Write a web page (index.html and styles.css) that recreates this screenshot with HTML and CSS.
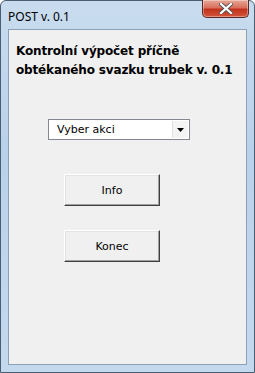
FILE: index.html
```html
<!DOCTYPE html>
<html lang="cs">
  <head>
    <meta charset="UTF-8" />
    <title>POST v. 0.1</title>
    <link rel="stylesheet" href="styles.css">
  </head>
  <body>
    <div class="window">
      <div class="titlebar">
        <span class="title">POST v. 0.1</span>
        <div class="close">
          <svg width="14" height="11" viewBox="0 0 14 11">
            <path d="M2 1 L12 10 M12 1 L2 10" stroke="#555" stroke-width="4" stroke-linecap="square" />
            <path d="M2 1 L12 10 M12 1 L2 10" stroke="#fff" stroke-width="2.2" stroke-linecap="square" />
          </svg>
        </div>
      </div>
      <div class="client">
        <h1 class="heading">Kontrolní výpočet příčně obtékaného svazku trubek v. 0.1</h1>
        <div class="combo">
          <span class="combo-text">Vyber akci</span>
          <span class="combo-arrow">
            <svg width="7" height="4" viewBox="0 0 7 4"><path d="M0 0 H7 L3.5 4 Z" fill="#000" /></svg>
          </span>
        </div>
        <div class="buttons">
          <button class="btn">Info</button>
          <button class="btn">Konec</button>
        </div>
      </div>
    </div>
  </body>
</html>
```

FILE: styles.css
```css
html,
body {
  margin: 0;
  padding: 0;
  background: #ffffff;
}
.window {
  width: 255px;
  height: 373px;
  box-sizing: border-box;
  border: 1px solid #4a5e72;
  border-radius: 6px 6px 0 0;
  background: linear-gradient(180deg, #c9dcef 0%, #b9d1ea 40%, #c4d9ee 100%);
  padding: 0 7px 7px 7px;
  display: flex;
  flex-direction: column;
  font-family: "DejaVu Sans", Tahoma, sans-serif;
}
.titlebar {
  height: 28px;
  display: flex;
  justify-content: space-between;
  align-items: flex-start;
}
.title {
  font-family: "Noto Sans", "Open Sans", sans-serif;
  font-size: 12px;
  color: #000;
  margin-top: 7px;
  margin-left: 0;
}
.close {
  width: 45px;
  height: 17px;
  margin-right: -2px;
  margin-top: -1px;
  border: 1px solid #5a2a26;
  border-top: none;
  border-radius: 0 0 5px 5px;
  background: linear-gradient(180deg, #e8a898 0%, #d8705c 45%, #c2321c 55%, #d2553b 100%);
  display: flex;
  align-items: center;
  justify-content: center;
  box-shadow: inset 0 0 0 1px rgba(255, 255, 255, 0.35);
}
.client {
  flex: 1;
  background: #f0f0f0;
  border: 1px solid #8ca0b6;
  display: flex;
  flex-direction: column;
}
.heading {
  margin: 12px 0 0 7px;
  font-size: 12px;
  font-weight: bold;
  line-height: 19px;
  letter-spacing: -0.15px;
  color: #000;
  width: 230px;
}
.combo {
  margin: 39px 0 0 39px;
  width: 140px;
  height: 19px;
  border: 1px solid #828790;
  background: #fff;
  display: flex;
  align-items: center;
  font-size: 11px;
}
.combo-text {
  flex: 1;
  padding-left: 8px;
}
.combo-arrow {
  width: 15px;
  height: 17px;
  border-left: 1px solid #e0e0e0;
  margin-right: 1px;
  background: #f4f4f4;
  display: flex;
  align-items: center;
  justify-content: center;
}
.buttons {
  display: flex;
  flex-direction: column;
  gap: 24px;
  margin: 34px 0 0 55px;
}
.btn {
  width: 96px;
  height: 32px;
  box-sizing: border-box;
  font-family: "DejaVu Sans", Tahoma, sans-serif;
  font-size: 11px;
  color: #000;
  background: #f0f0f0;
  border: 1px solid;
  border-color: #ffffff #404040 #404040 #ffffff;
  box-shadow: inset -1px -1px 0 #a0a0a0, inset 1px 1px 0 #e3e3e3;
  padding: 0;
}
```
